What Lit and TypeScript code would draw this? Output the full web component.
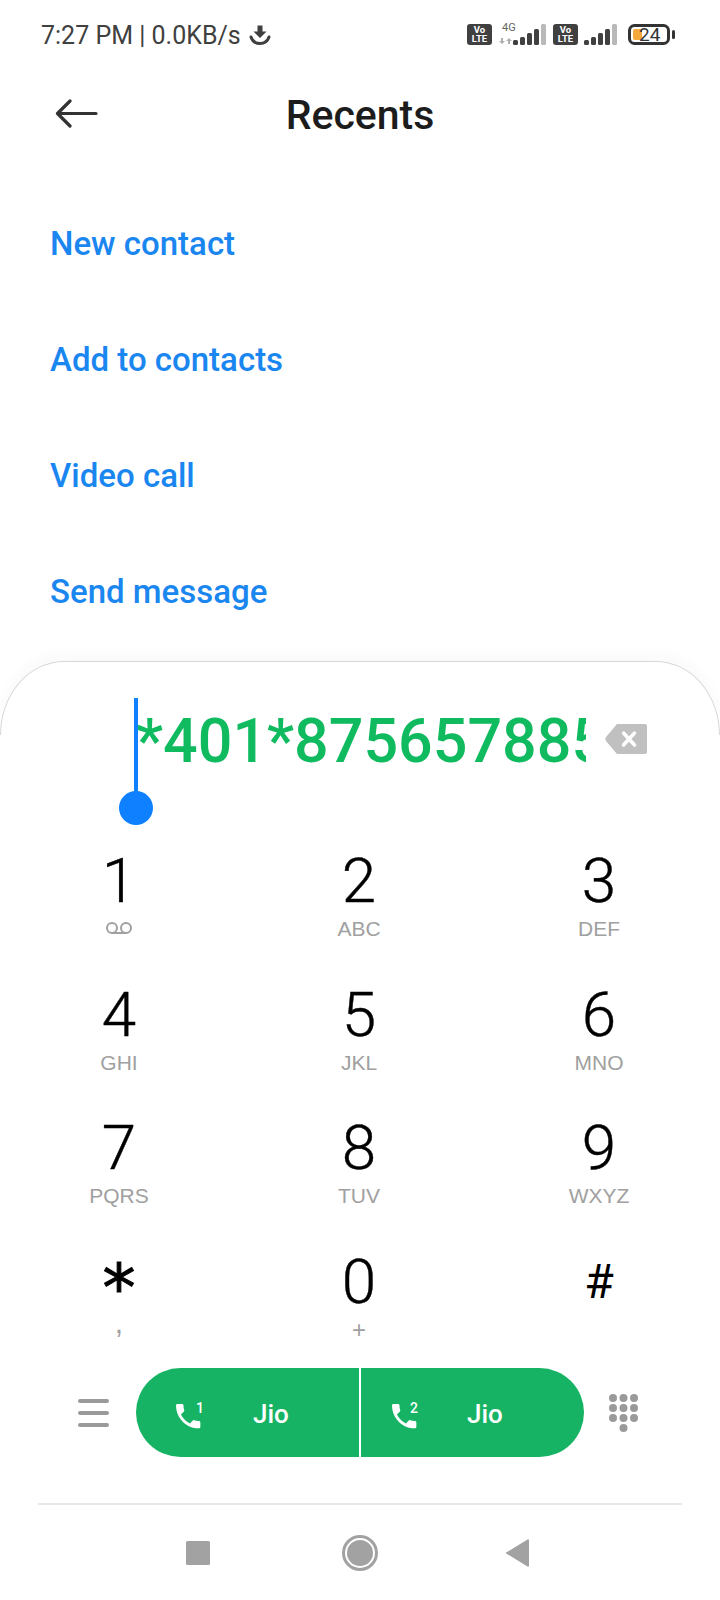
import { LitElement, html, css, svg } from "lit";
import { customElement } from "lit/decorators.js";

const KEYS = [
	["1", ""],
	["2", "ABC"],
	["3", "DEF"],
	["4", "GHI"],
	["5", "JKL"],
	["6", "MNO"],
	["7", "PQRS"],
	["8", "TUV"],
	["9", "WXYZ"],
	["*", ","],
	["0", "+"],
	["#", ""],
];

const LINKS = ["New contact", "Add to contacts", "Video call", "Send message"];

const PHONE =
	"M6.62 10.79c1.44 2.83 3.76 5.14 6.59 6.59l2.2-2.2c.27-.27.67-.36 1.02-.24 1.12.37 2.33.57 3.57.57.55 0 1 .45 1 1V20c0 .55-.45 1-1 1-9.39 0-17-7.61-17-17 0-.55.45-1 1-1h3.5c.55 0 1 .45 1 1 0 1.25.2 2.45.57 3.57.11.35.03.74-.25 1.02l-2.2 2.2z";

const volte = (x: number) => svg`
	<rect x=${x} y="4" width="25" height="21" rx="3" fill="#404040" />
	<text x=${x + 12.5} y="13" class="badge">Vo</text>
	<text x=${x + 12.5} y="22" class="badge">LTE</text>
`;

const bars = (items: number[][], light: number) =>
	items.map(
		([x, h], i) => svg`<rect x=${x} y=${25 - h} width="5" height=${h} rx="1.5" fill=${i === light ? "#b9b9b9" : "#404040"} />`
	);

@customElement("app-root")
export class AppRoot extends LitElement {
	static styles = css`
		:host {
			display: flex;
			flex-direction: column;
			width: 720px;
			height: 1600px;
			overflow: hidden;
			background: #fff;
			font-family: Roboto, "Liberation Sans", sans-serif;
		}

		.status {
			display: flex;
			justify-content: space-between;
			align-items: center;
			height: 30px;
			padding: 20px 41px 0;
			color: #404040;
			font-size: 25px;
		}

		.status-left {
			display: flex;
			align-items: center;
			gap: 8px;
		}

		.status svg {
			display: block;
		}

		.badge {
			font: 700 9.5px Roboto, sans-serif;
			fill: #fff;
			text-anchor: middle;
		}

		.tiny {
			font: 400 11px Roboto, sans-serif;
			fill: #666;
		}

		.batt {
			font: 400 19px Roboto, sans-serif;
			fill: #333;
		}

		.header {
			display: flex;
			align-items: center;
			justify-content: center;
			position: relative;
			height: 66px;
			margin-top: 32px;
			color: #1c1c1c;
			font-size: 41px;
			font-weight: 500;
		}

		.back {
			position: absolute;
			left: 55px;
			top: 17px;
		}

		.links {
			display: flex;
			flex-direction: column;
			margin-top: 39px;
			padding-left: 50px;
		}

		.links div {
			height: 116px;
			line-height: 116px;
			color: #1a86f0;
			font-size: 33px;
			font-weight: 500;
		}

		.sheet {
			position: relative;
			flex: 1;
			margin-top: 11px;
			display: flex;
			flex-direction: column;
			background: #fff;
			border-radius: 64px 64px 0 0 / 74px 74px 0 0;
			box-shadow: 0 -8px 14px rgba(0, 0, 0, 0.025);
		}

		.sheet::before {
			content: "";
			position: absolute;
			inset: 0 0 auto;
			height: 74px;
			box-sizing: border-box;
			border: 1px solid #d8d8d8;
			border-bottom: none;
			border-radius: 64px 64px 0 0 / 74px 74px 0 0;
		}

		.number-row {
			display: flex;
			align-items: center;
			height: 80px;
			margin-top: 40px;
			padding-left: 136px;
		}

		.number {
			width: 450px;
			overflow: hidden;
			white-space: nowrap;
			color: #10bb5f;
			font-size: 61px;
			font-weight: 500;
			line-height: 80px;
		}

		.del {
			display: block;
			margin: 0 0 4px 19px;
		}

		.handle {
			position: absolute;
			left: 119px;
			top: 37px;
			width: 34px;
			height: 128px;
		}

		.keys {
			display: grid;
			grid-template-columns: 119px 240px 240px;
			grid-auto-rows: 133.5px;
			margin-top: 69px;
			justify-content: start;
		}

		.key {
			display: flex;
			flex-direction: column;
			align-items: center;
			width: 0;
			justify-self: end;
		}

		.digit {
			color: #000;
			font-size: 62px;
			font-weight: 300;
			-webkit-text-stroke: 0.4px #000;
			line-height: 62px;
			height: 62px;
		}

		.digit.star {
			font-family: "DejaVu Sans", sans-serif;
			font-size: 66px;
			font-weight: 400;
			-webkit-text-stroke: 1px #000;
			line-height: 76px;
		}

		.digit.hash {
			font-size: 48px;
			font-weight: 400;
			-webkit-text-stroke: 0;
		}

		.letters {
			margin-top: 5px;
			color: #a0a0a0;
			font-family: "Liberation Sans", Arial, sans-serif;
			font-size: 21px;
			line-height: 24px;
			height: 24px;
			white-space: nowrap;
		}

		.letters.comma {
			font-size: 30px;
			line-height: 10px;
		}

		.letters.plus {
			font-size: 24px;
		}

		.call-row {
			display: flex;
			align-items: center;
			height: 89px;
			margin-top: -16px;
			padding-left: 78px;
		}

		.menu {
			display: flex;
			flex-direction: column;
			gap: 8px;
			width: 31px;
		}

		.menu span {
			height: 4px;
			border-radius: 2px;
			background: #9a9a9a;
		}

		.call {
			display: flex;
			align-items: center;
			box-sizing: border-box;
			width: 223px;
			height: 89px;
			color: #fff;
			background: #16b364;
			font-size: 26px;
			font-weight: 500;
		}

		.call span {
			margin-top: 3px;
		}

		.call.one {
			margin-left: 27px;
			border-radius: 44.5px 0 0 44.5px;
			padding-left: 38px;
		}

		.call.one span {
			margin-left: 45px;
		}

		.call.two {
			margin-left: 2px;
			border-radius: 0 44.5px 44.5px 0;
			padding-left: 29px;
		}

		.call.two span {
			margin-left: 43px;
		}

		.call svg {
			display: block;
		}

		.sim {
			font: 500 14px Roboto, sans-serif;
			fill: #fff;
		}

		.dots {
			display: block;
			margin: 3px 0 0 25px;
		}

		.nav {
			display: flex;
			align-items: center;
			justify-content: center;
			height: 95px;
			margin: 46px 38px 0;
			border-top: 2px solid #e8e8e8;
		}

		.nav svg {
			display: block;
		}
	`;

	render() {
		return html`
			<div class="status">
				<div class="status-left">
					<span>7:27 PM | 0.0KB/s</span>
					<svg width="22" height="22" viewBox="0 0 22 22" aria-hidden="true">
						<path d="M8.5 1.5h5v6h4L11 14 4.500 7.500h4z" fill="#404040" />
						<path d="M2 13c1.500 4.500 5 6.500 9 6.500s7.500-2 9-6.500" fill="none" stroke="#404040" stroke-width="3" stroke-linecap="round" />
					</svg>
				</div>
				<svg class="status-right" width="220" height="30" viewBox="459 0 220 30" aria-hidden="true">
					${volte(467)}
					<text x="502" y="11" class="tiny">4G</text>
					<path d="M501 18h2v3h2l-3 3-3-3h2zM508 24h2v-3h2l-3-3-3 3h2z" fill="#b0b0b0" />
					${bars(
						[
							[513, 5],
							[520, 8],
							[527, 12],
							[534, 16],
							[541, 21],
						],
						4
					)}
					${volte(553)}
					${bars(
						[
							[584, 5],
							[591, 8],
							[598, 12],
							[605, 16],
							[612, 21],
						],
						4
					)}
					<rect x="629.500" y="5.500" width="39" height="18" rx="5" fill="none" stroke="#333" stroke-width="3" />
					<rect x="633" y="9" width="9" height="11" rx="2" fill="#f5a83c" />
					<text x="639" y="21" class="batt">24</text>
					<rect x="672" y="10" width="3" height="9" rx="1.500" fill="#333" />
				</svg>
			</div>

			<div class="header">
				<svg class="back" width="44" height="30" viewBox="0 0 44 30" aria-hidden="true">
					<path d="M41 14.500H3M15 2L2.500 14.500 15 27" fill="none" stroke="#333" stroke-width="3.200" stroke-linecap="round" stroke-linejoin="round" />
				</svg>
				Recents
			</div>

			<div class="links">${LINKS.map((l) => html`<div>${l}</div>`)}</div>

			<div class="sheet">
				<div class="number-row">
					<div class="number">*401*875657885</div>
					<svg class="del" width="42" height="30" viewBox="0 0 42 30" aria-hidden="true">
						<path d="M12 0h28a2 2 0 0 1 2 2v26a2 2 0 0 1-2 2H12L1 17a3.500 3.500 0 0 1 0-4z" fill="#c0c0c0" />
						<path d="M18.500 9l11 12M29.500 9l-11 12" stroke="#fff" stroke-width="3.500" stroke-linecap="round" />
					</svg>
				</div>

				<svg class="handle" viewBox="0 0 34 128" aria-hidden="true">
					<rect x="15" y="0" width="4" height="99" fill="#0f80ff" />
					<circle cx="17" cy="110" r="17" fill="#0f80ff" />
				</svg>

				<div class="keys">
					${KEYS.map(
						([d, l]) => html`
							<div class="key">
								<div class="digit ${d === "*" ? "star" : d === "#" ? "hash" : ""}">${d}</div>
								${d === "1"
									? html`<svg class="letters" width="30" height="24" viewBox="0 0 30 24" aria-hidden="true">
											<circle cx="8" cy="11" r="5" fill="none" stroke="#a0a0a0" stroke-width="2" />
											<circle cx="22" cy="11" r="5" fill="none" stroke="#a0a0a0" stroke-width="2" />
											<path d="M8 16h14" stroke="#a0a0a0" stroke-width="2" />
										</svg>`
									: html`<div class="letters ${d === "*" ? "comma" : d === "0" ? "plus" : ""}">${l}</div>`}
							</div>
						`
					)}
				</div>

				<div class="call-row">
					<div class="menu"><span></span><span></span><span></span></div>
					<div class="call one">
						<svg width="34" height="34" viewBox="0 0 34 34" aria-hidden="true">
							<path d=${PHONE} fill="#fff" transform="translate(-2 4) scale(1.35)" />
							<text x="22" y="17" class="sim">1</text>
						</svg>
						<span>Jio</span>
					</div>
					<div class="call two">
						<svg width="34" height="34" viewBox="0 0 34 34" aria-hidden="true">
							<path d=${PHONE} fill="#fff" transform="translate(-2 4) scale(1.35)" />
							<text x="20" y="17" class="sim">2</text>
						</svg>
						<span>Jio</span>
					</div>
					<svg class="dots" width="30" height="40" viewBox="0 0 30 40" aria-hidden="true">
						${[0, 1, 2].flatMap((r) =>
							[0, 1, 2].map((c) => svg`<circle cx=${4 + c * 10.500} cy=${4 + r * 10} r="4" fill="#9a9a9a" />`)
						)}
						<circle cx="14.500" cy="34" r="4" fill="#9a9a9a" />
					</svg>
				</div>

				<div class="nav">
					<svg width="440" height="44" viewBox="140 0 440 44" aria-hidden="true">
						<rect x="186" y="10" width="24" height="24" rx="1.500" fill="#a2a2a2" />
						<circle cx="360" cy="22" r="16.500" fill="none" stroke="#a2a2a2" stroke-width="3" />
						<circle cx="360" cy="22" r="13" fill="#a2a2a2" />
						<path d="M529 9.500v25a1 1 0 0 1-1.500 1L507 23a1 1 0 0 1 0-2l20.500-12.500a1 1 0 0 1 1.500 1z" fill="#a2a2a2" />
					</svg>
				</div>
			</div>
		`;
	}
}
